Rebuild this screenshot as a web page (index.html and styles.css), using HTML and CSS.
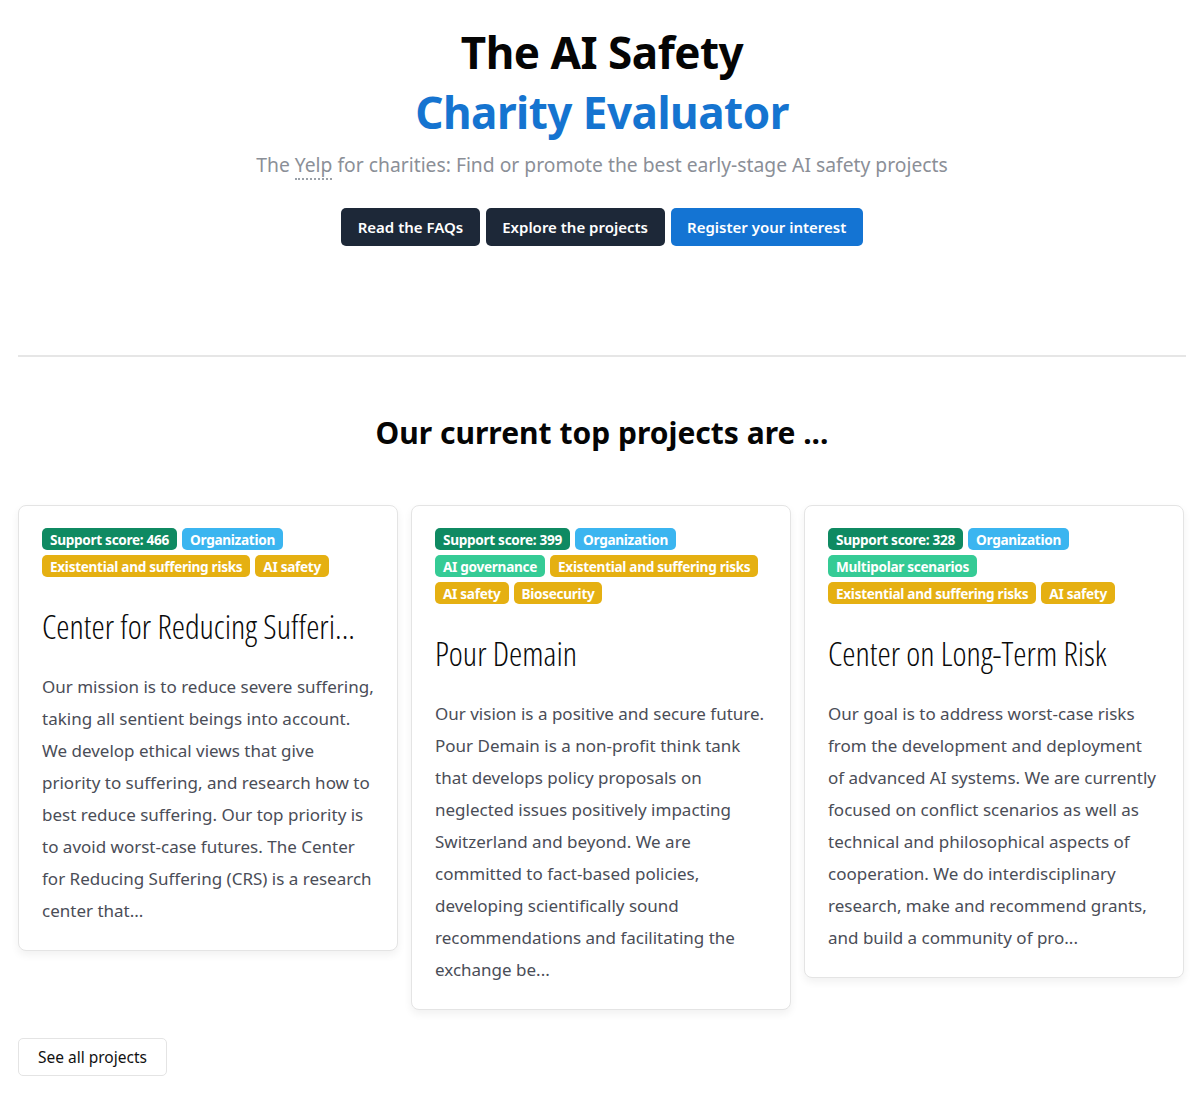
FILE: index.html
```html
<!DOCTYPE html>
<html lang="en">
<head>
<meta charset="utf-8">
<title>The AI Safety Charity Evaluator</title>
<link rel="stylesheet" href="styles.css">
</head>
<body>
<header class="hero">
  <h1 class="hero-title"><span class="hero-line1">The AI Safety</span><span class="hero-line2">Charity Evaluator</span></h1>
  <p class="hero-sub">The <abbr class="abbr" title="A review site">Yelp</abbr> for charities: Find or promote the best early-stage AI safety projects</p>
  <div class="hero-actions">
    <a class="btn btn-dark" href="#">Read the FAQs</a>
    <a class="btn btn-dark" href="#">Explore the projects</a>
    <a class="btn btn-blue" href="#">Register your interest</a>
  </div>
</header>
<hr class="divider">
<section class="top">
  <h2 class="top-title">Our current top projects are ...</h2>
  <div class="cards">
    <article class="card">
      <div class="tags">
        <span class="tag tag-score">Support score: 466</span>
        <span class="tag tag-org">Organization</span>
        <span class="tag tag-yellow">Existential and suffering risks</span>
        <span class="tag tag-yellow">AI safety</span>
      </div>
      <h3 class="card-title">Center for Reducing Sufferi...</h3>
      <p class="card-text">Our mission is to reduce severe suffering, taking all sentient beings into account. We develop ethical views that give priority to suffering, and research how to best reduce suffering. Our top priority is to avoid worst-case futures. The Center for Reducing Suffering (CRS) is a research center that...</p>
    </article>
    <article class="card">
      <div class="tags">
        <span class="tag tag-score">Support score: 399</span>
        <span class="tag tag-org">Organization</span>
        <span class="tag tag-teal">AI governance</span>
        <span class="tag tag-yellow">Existential and suffering risks</span>
        <span class="tag tag-yellow">AI safety</span>
        <span class="tag tag-yellow">Biosecurity</span>
      </div>
      <h3 class="card-title">Pour Demain</h3>
      <p class="card-text">Our vision is a positive and secure future. Pour Demain is a non-profit think tank that develops policy proposals on neglected issues positively impacting Switzerland and beyond. We are committed to fact-based policies, developing scientifically sound recommendations and facilitating the exchange be...</p>
    </article>
    <article class="card">
      <div class="tags">
        <span class="tag tag-score">Support score: 328</span>
        <span class="tag tag-org">Organization</span>
        <span class="tag tag-teal">Multipolar scenarios</span>
        <span class="tag tag-yellow">Existential and suffering risks</span>
        <span class="tag tag-yellow">AI safety</span>
      </div>
      <h3 class="card-title">Center on Long-Term Risk</h3>
      <p class="card-text">Our goal is to address worst-case risks from the development and deployment of advanced AI systems. We are currently focused on conflict scenarios as well as technical and philosophical aspects of cooperation. We do interdisciplinary research, make and recommend grants, and build a community of pro...</p>
    </article>
  </div>
  <a class="btn btn-outline" href="#">See all projects</a>
</section>
</body>
</html>
```
FILE: styles.css
```css
* { box-sizing: border-box; }
html, body { margin: 0; padding: 0; background: #fff; }
body {
  font-family: "Noto Sans", "Open Sans", sans-serif;
  color: #111;
  padding: 0 16px 0 18px;
}
.hero {
  display: flex;
  flex-direction: column;
  align-items: center;
  padding-top: 22px;
}
.hero-title {
  margin: 0;
  display: flex;
  flex-direction: column;
  align-items: center;
  font-size: 44px;
  line-height: 60px;
  font-weight: 700;
  letter-spacing: -0.5px;
}
.hero-line1 { color: #050505; }
.hero-line2 { color: #1574d0; }
.hero-sub {
  margin: 9px 0 0;
  font-size: 19.3px;
  line-height: 28px;
  color: #8b8f97;
  font-weight: 400;
}
.abbr {
  text-decoration: none;
  border-bottom: 2px dotted #9aa0a8;
}
.hero-actions {
  display: flex;
  gap: 6px;
  margin-top: 29px;
}
.btn {
  display: inline-flex;
  align-items: center;
  height: 38px;
  padding: 0 16.5px;
  border-radius: 5px;
  font-size: 15px;
  font-weight: 600;
  text-decoration: none;
  color: #fff;
}
.btn-dark { background: #1d2838; }
.btn-blue { background: #1474d3; }
.divider {
  margin: 109px 0 0;
  border: 0;
  border-top: 2px solid #e6e6e6;
}
.top { padding-top: 56px; padding-bottom: 24px; }
.top-title {
  margin: 0;
  text-align: center;
  font-size: 30px;
  line-height: 40px;
  font-weight: 700;
  color: #050505;
}
.cards {
  display: flex;
  gap: 13px;
  align-items: flex-start;
  margin-top: 52px;
}
.card {
  flex: 0 0 380px;
  border: 1px solid #e4e4e4;
  border-radius: 8px;
  background: #fff;
  box-shadow: 0 4px 8px rgba(0,0,0,0.06);
  padding: 22px 23px 23px 23px;
}
.tags {
  display: flex;
  flex-wrap: wrap;
  gap: 5px 5px;
}
.tag {
  display: inline-flex;
  align-items: center;
  height: 22px;
  padding: 0 8px;
  border-radius: 5px;
  font-size: 13.6px;
  font-weight: 700;
  color: #fff;
  letter-spacing: -0.3px;
}
.tag-score { background: #0f8a62; }
.tag-org { background: #3bb5f0; }
.tag-yellow { background: #e5b012; }
.tag-teal { background: #35cb95; }
.card-title {
  margin: 29px 0 0;
  font-family: "Open Sans", sans-serif;
  font-stretch: 75%;
  font-weight: 350;
  font-size: 33.5px;
  line-height: 40px;
  color: #0a0a0a;
  white-space: nowrap;
}
.card-text {
  margin: 25px 0 0;
  font-size: 17px;
  line-height: 32px;
  color: #4a4d57;
}
.btn-outline {
  margin-top: 28px;
  padding: 0 19px;
  background: #fff;
  color: #111;
  border: 1px solid #e4e4e4;
  font-weight: 400;
  font-size: 15.5px;
}
```
